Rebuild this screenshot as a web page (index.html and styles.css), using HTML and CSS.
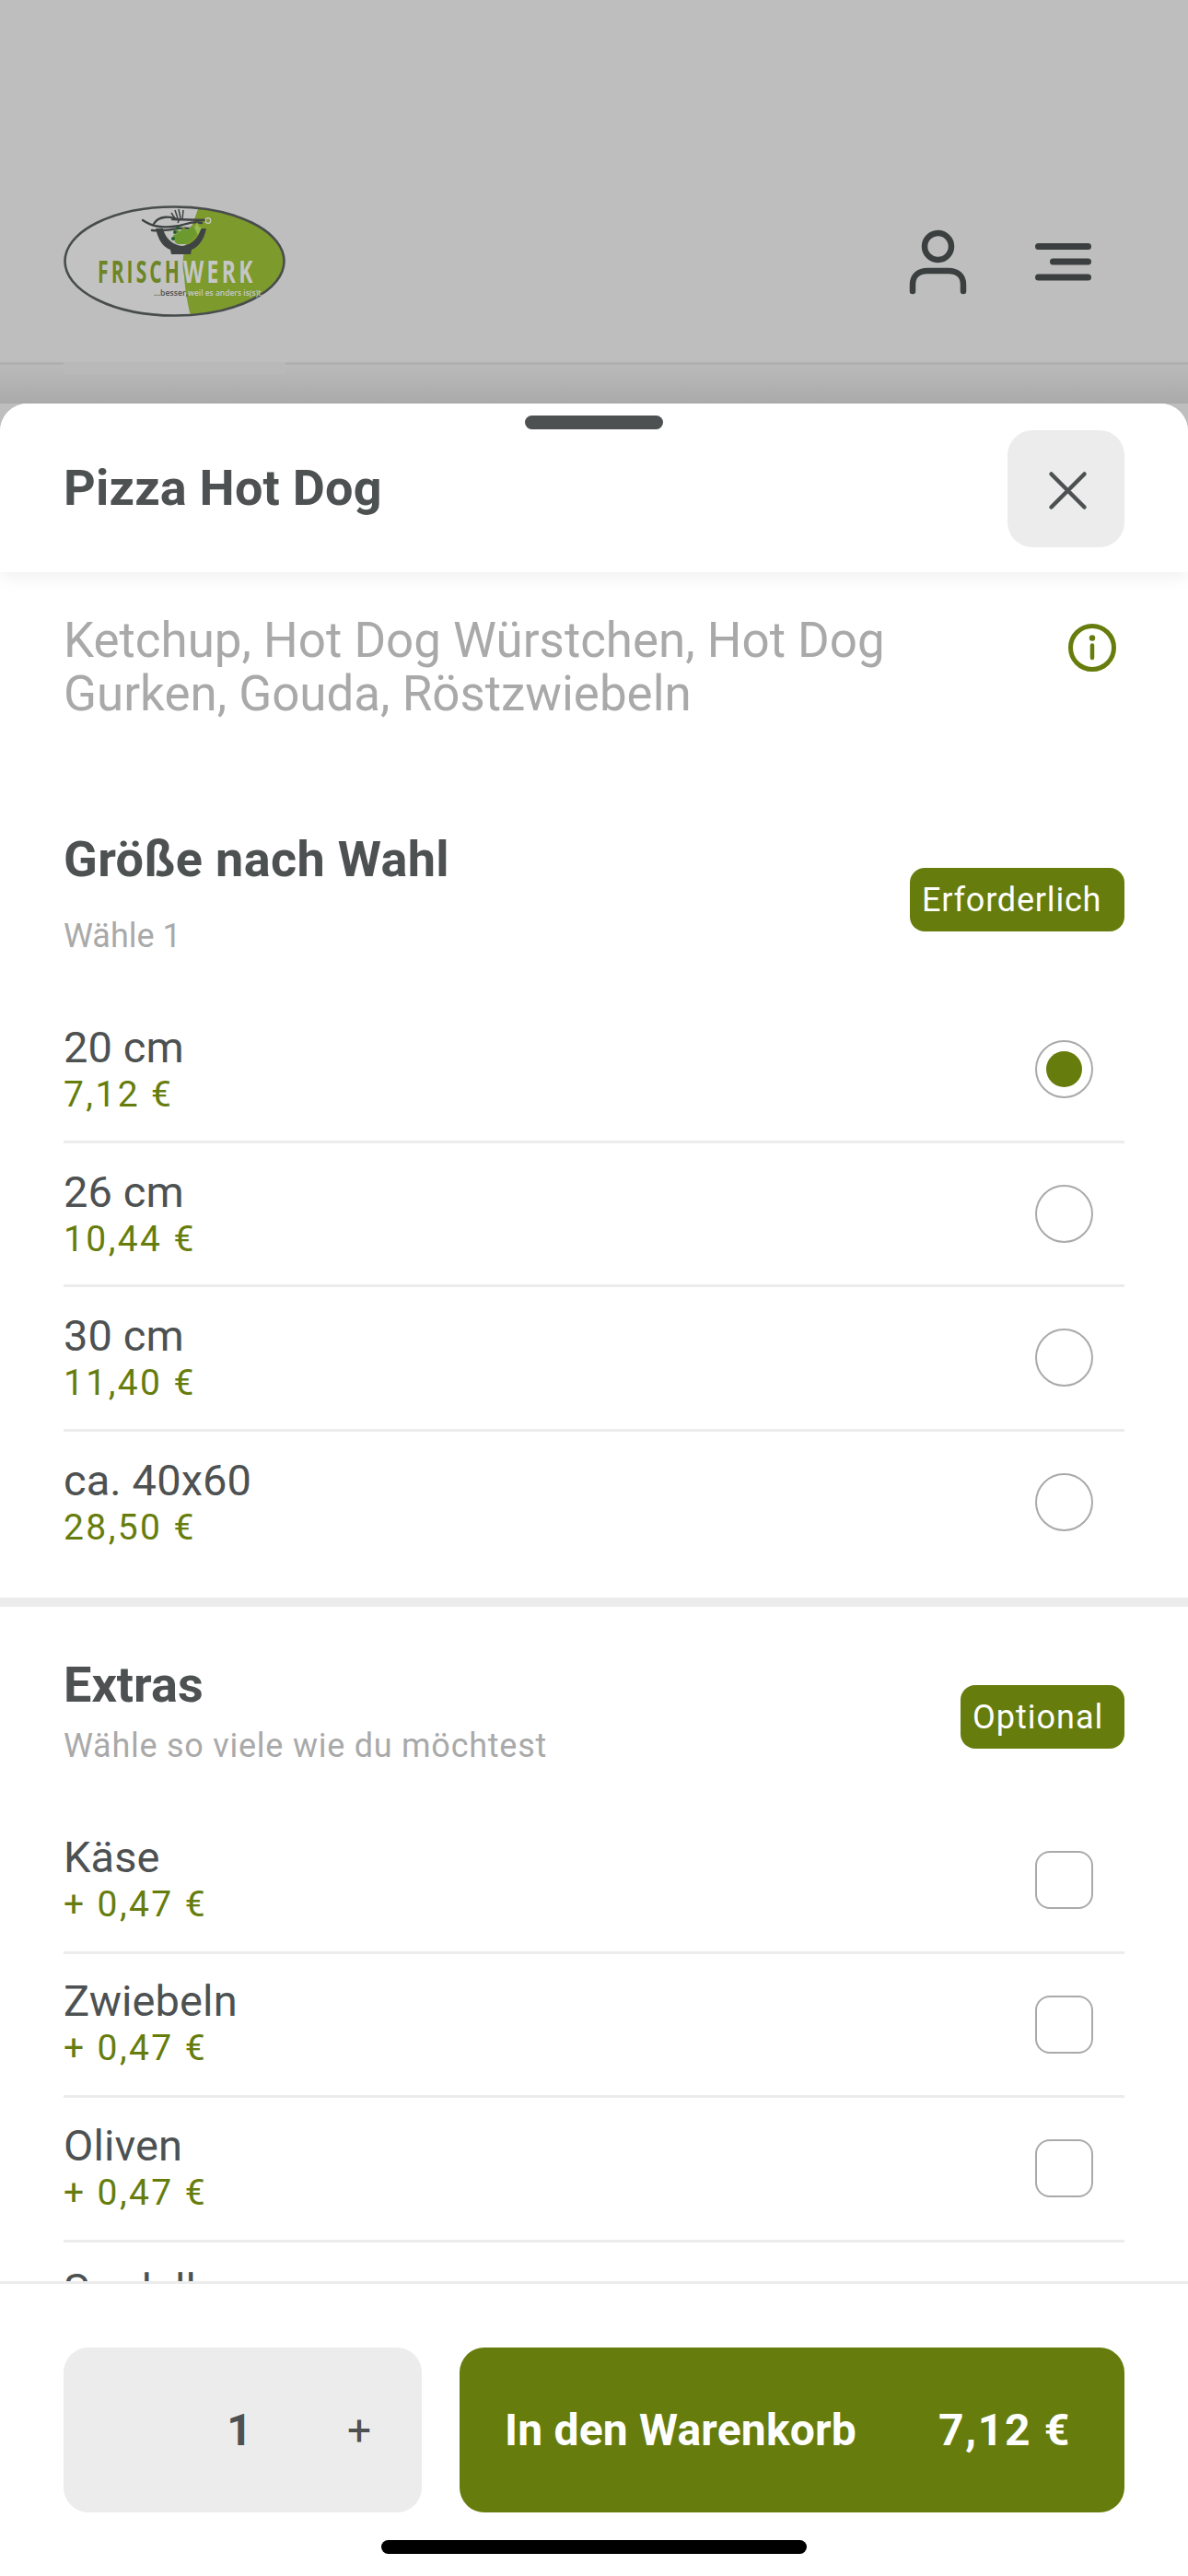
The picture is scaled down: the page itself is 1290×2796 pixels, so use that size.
FILE: index.html
```html
<!DOCTYPE html>
<html lang="de">
<head>
<meta charset="utf-8">
<title>Pizza Hot Dog</title>
<link rel="stylesheet" href="styles.css">
</head>
<body>
<div class="page">
  <header class="topbar">
    <svg class="logo" viewBox="69 224 241 121" width="241" height="121" aria-label="Frischwerk">
      <defs><clipPath id="oval"><ellipse cx="189.5" cy="284.5" rx="119" ry="59"/></clipPath></defs>
      <ellipse cx="189.5" cy="284.5" rx="119" ry="59" fill="#c2c2c2"/>
      <path clip-path="url(#oval)" d="M217 222 C208 250 194 275 200 300 C201 318 204 332 208 348 L320 348 L320 222 Z" fill="#7d9a2c"/>
      <ellipse cx="189.5" cy="284.5" rx="119" ry="59" fill="none" stroke="#484c4c" stroke-width="2.6"/>
      <path d="M169 249 C172 262 177 269 185 272 L186 277 L207 277 L208 272 C216 269 222 260 224 249 L218 249 C216 258 210 266 198 268 C186 267 179 258 177 249 Z" fill="#3f4343"/>
      <path d="M155 240 C165 247 176 249 195 246 C205 243 212 241 219 243 M165 251 C180 253 195 247 205 249 M167 244 C172 235 186 235 194 240 M187 239 L224 240" fill="none" stroke="#3f4343" stroke-width="2.4" stroke-linecap="round"/>
      <path d="M190 238 L186 232 M193 238 L190 229 M196 238 L194 228 M198 239 L199 229 M193 243 L195 238" fill="none" stroke="#3f4343" stroke-width="1.5"/>
      <circle cx="226" cy="240.5" r="2.8" fill="#7d9a2c" stroke="#ccc" stroke-width="1.2"/>
      <path d="M190 264 L188 256 L192 255 L190 250 L196 252 L199 247 L203 251 L208 246 L213 250 L212 256 L208 261 L201 266 L193 266 Z" fill="#6c9a2f"/>
      <path d="M211 248 L214 242 L216 247 L219 248 L215 256 Z" fill="#94ba52"/>
      <circle cx="190" cy="253" r="2" fill="#1f5e2a"/><circle cx="188" cy="260" r="2" fill="#1f5e2a"/><circle cx="193" cy="248" r="1.8" fill="#1f5e2a"/>
      <text class="logo-word" x="106" y="308" textLength="92" lengthAdjust="spacingAndGlyphs" fill="#6d8526">FRISCH</text>
      <text class="logo-word" x="199" y="308" textLength="79" lengthAdjust="spacingAndGlyphs" fill="#c6c6c6">WERK</text>
      <text class="logo-tag" x="167" y="322" textLength="37" lengthAdjust="spacingAndGlyphs" fill="#4d5050">...besser,</text>
      <text class="logo-tag" x="204" y="322" textLength="82" lengthAdjust="spacingAndGlyphs" fill="#c8c8c8">weil es anders is(s)t.</text>
    </svg>
    <div class="top-icons">
      <svg width="67" height="73" viewBox="0 0 67 73"><ellipse cx="33.5" cy="20.5" rx="14.5" ry="14.5" fill="none" stroke="#3b3f3f" stroke-width="6.5"/><path d="M6 69 V62 C6 52 13 47 22 47 H45 C54 47 61 52 61 62 V69" fill="none" stroke="#3b3f3f" stroke-width="6.5" stroke-linecap="round"/></svg>
      <svg width="61" height="42" viewBox="0 0 61 42"><path d="M3.5 4.5 H57.5 M19.5 21 H57.5 M3.5 38 H57.5" stroke="#3b3f3f" stroke-width="7" stroke-linecap="round"/></svg>
    </div>
    <div class="logo-tab"></div>
  </header>
  <div class="dim"></div>
  <main class="sheet">
    <div class="sheet-head">
      <div class="handle"></div>
      <div class="title-row">
        <h1 class="title">Pizza Hot Dog</h1>
        <button class="close"><svg width="127" height="127" viewBox="0 0 127 127"><path d="M47.5 47.5 L83.5 83.5 M83.5 47.5 L47.5 83.5" stroke="#4d5152" stroke-width="4.5" stroke-linecap="round"/></svg></button>
      </div>
    </div>
    <div class="scroll">
      <div class="desc-row">
        <p class="desc">Ketchup, Hot Dog Würstchen, Hot Dog Gurken, Gouda, Röstzwiebeln</p>
        <svg class="info" width="52" height="52" viewBox="0 0 52 52"><circle cx="26" cy="26" r="23.5" fill="none" stroke="#667d0d" stroke-width="5"/><circle cx="26" cy="15.5" r="3.2" fill="#667d0d"/><path d="M26 23.5 V37" stroke="#667d0d" stroke-width="4.5" stroke-linecap="round"/></svg>
      </div>

      <section class="group group-size">
        <div class="group-head head-size">
          <div>
            <h2 class="group-title title-size">Größe nach Wahl</h2>
            <p class="group-sub sub-size">Wähle 1</p>
          </div>
          <span class="badge badge-size">Erforderlich</span>
        </div>
        <div class="row"><div class="row-text"><div class="name">20 cm</div><div class="price">7,12 €</div></div><span class="radio on"></span></div>
        <div class="row"><div class="row-text"><div class="name">26 cm</div><div class="price">10,44 €</div></div><span class="radio"></span></div>
        <div class="row"><div class="row-text"><div class="name">30 cm</div><div class="price">11,40 €</div></div><span class="radio"></span></div>
        <div class="row last"><div class="row-text"><div class="name">ca. 40x60</div><div class="price">28,50 €</div></div><span class="radio"></span></div>
      </section>

      <div class="section-rule"></div>

      <section class="group group-extra">
        <div class="group-head head-extra">
          <div>
            <h2 class="group-title">Extras</h2>
            <p class="group-sub sub-extra">Wähle so viele wie du möchtest</p>
          </div>
          <span class="badge badge-extra">Optional</span>
        </div>
        <div class="row"><div class="row-text"><div class="name">Käse</div><div class="price">+ 0,47 €</div></div><span class="check"></span></div>
        <div class="row"><div class="row-text"><div class="name">Zwiebeln</div><div class="price">+ 0,47 €</div></div><span class="check"></span></div>
        <div class="row"><div class="row-text"><div class="name">Oliven</div><div class="price">+ 0,47 €</div></div><span class="check"></span></div>
        <div class="row"><div class="row-text"><div class="name">Sardellen</div><div class="price">+ 0,47 €</div></div><span class="check"></span></div>
      </section>
    </div>
    <footer class="footer">
      <div class="qty"><span></span><span class="qty-num">1</span><span class="qty-plus">+</span></div>
      <button class="add"><span class="add-label">In den Warenkorb</span><span class="add-price">7,12 €</span></button>
      <div class="home"></div>
    </footer>
  </main>
</div>
</body>
</html>
```

FILE: styles.css
```css
* { box-sizing: border-box; }
html, body { margin: 0; padding: 0; background: #bebebe; }
body { font-family: Roboto, "Liberation Sans", sans-serif; color: #4d5152; }
h1, h2, p { margin: 0; }

.page { width: 1290px; height: 2796px; display: flex; flex-direction: column; overflow: hidden; background: #bebebe; }

.topbar { position: relative; height: 396px; flex: none; padding: 223px 105px 0 69px; display: flex; justify-content: space-between; align-items: flex-start; border-bottom: 3px solid #b0b0b0; }
.logo { display: block; }
.logo-word { font-family: "Open Sans", sans-serif; font-size: 34px; font-weight: 700; letter-spacing: 5px; }
.logo-tag { font-family: "Open Sans", sans-serif; font-size: 8px; font-weight: 600; }
.top-icons { display: flex; align-items: center; gap: 72px; padding-top: 24px; }
.logo-tab { position: absolute; left: 69px; top: 393px; width: 241px; height: 13px; background: #b9b9b9; }

.dim { height: 42px; flex: none; background: linear-gradient(#bababa, #aaaaaa); }

.sheet { flex: 1; min-height: 0; background: #fff; border-radius: 30px 30px 0 0; display: flex; flex-direction: column; overflow: hidden; }
.sheet-head { position: relative; z-index: 2; flex: none; height: 183px; padding-top: 13px; background: #fff; box-shadow: 0 6px 18px rgba(0,0,0,.06); }
.handle { width: 150px; height: 15px; margin: 0 auto; border-radius: 8px; background: #4d5152; }
.title-row { display: flex; justify-content: space-between; align-items: center; padding: 1px 69px 0 69px; }
.title { font-size: 54px; line-height: 60px; font-weight: 700; margin-top: -2px; letter-spacing: .2px; }
.close { width: 127px; height: 127px; padding: 0; border: 0; border-radius: 27px; background: #ececec; display: block; }
.close svg { display: block; }

.scroll { flex: 1; min-height: 0; overflow: hidden; }
.desc-row { display: flex; justify-content: space-between; align-items: flex-start; padding: 45px 78px 0 69px; }
.desc { width: 950px; font-size: 52.9px; line-height: 58px; color: #a9a9a9; }
.info { margin-top: 11px; flex: none; }

.group { padding: 0 69px; }
.group-size { padding-top: 119px; padding-bottom: 27px; }
.group-extra { padding-top: 53px; }
.group-head { display: flex; justify-content: space-between; align-items: flex-start; }
.head-size { padding-bottom: 47px; }
.head-extra { padding-bottom: 48px; }
.group-title { font-size: 54px; line-height: 64px; font-weight: 700; }
.title-size { letter-spacing: .35px; }
.group-sub { font-size: 36px; line-height: 42px; color: #a9a9a9; }
.sub-size { margin-top: 30px; }
.sub-extra { margin-top: 13px; letter-spacing: .75px; }
.badge { display: flex; align-items: center; height: 69px; padding-left: 13px; border-radius: 16px; background: #667d0d; color: #fff; font-size: 36px; }
.badge-size { width: 233px; margin-top: 41px; letter-spacing: .8px; }
.badge-extra { width: 178px; margin-top: 32px; letter-spacing: 1px; }

.row { height: 156.5px; display: flex; justify-content: space-between; align-items: center; padding-right: 34px; border-bottom: 3px solid #ececec; }
.row.last { height: 153.5px; border-bottom: 0; }
.row-text { padding-top: 3px; }
.group-extra .row-text { padding-top: 0; }
.name { font-size: 47px; line-height: 48px; letter-spacing: .1px; }
.price { margin-top: 4px; font-size: 39px; line-height: 46px; color: #667d0d; letter-spacing: 2.4px; }
.radio { width: 63px; height: 63px; border: 2.5px solid #aaa; border-radius: 50%; display: flex; align-items: center; justify-content: center; }
.radio.on::after { content: ""; width: 39px; height: 39px; border-radius: 50%; background: #667d0d; }
.check { width: 63px; height: 63px; border: 2.5px solid #aaa; border-radius: 16px; }

.section-rule { height: 10px; background: #ececec; }

.footer { position: relative; flex: none; height: 320px; border-top: 3px solid #ececec; background: #fff; padding: 69px 69px 0 69px; display: flex; align-items: flex-start; gap: 41px; }
.qty { width: 389px; height: 179px; flex: none; border-radius: 27px; background: #ececec; display: grid; grid-template-columns: 126px 130px 130px; align-items: center; justify-items: center; }
.qty-num { font-size: 48px; font-weight: 700; }
.qty-plus { font-size: 46px; font-weight: 400; }
.add { flex: 1; height: 179px; border: 0; border-radius: 27px; background: #667d0d; color: #fff; padding: 0 58px 0 49px; display: flex; justify-content: space-between; align-items: center; font-family: inherit; font-size: 48px; font-weight: 700; }
.add-label { letter-spacing: .2px; }
.add-price { letter-spacing: 1.7px; }
.home { position: absolute; left: 414px; top: 278px; width: 462px; height: 15px; border-radius: 8px; background: #000; }
```
